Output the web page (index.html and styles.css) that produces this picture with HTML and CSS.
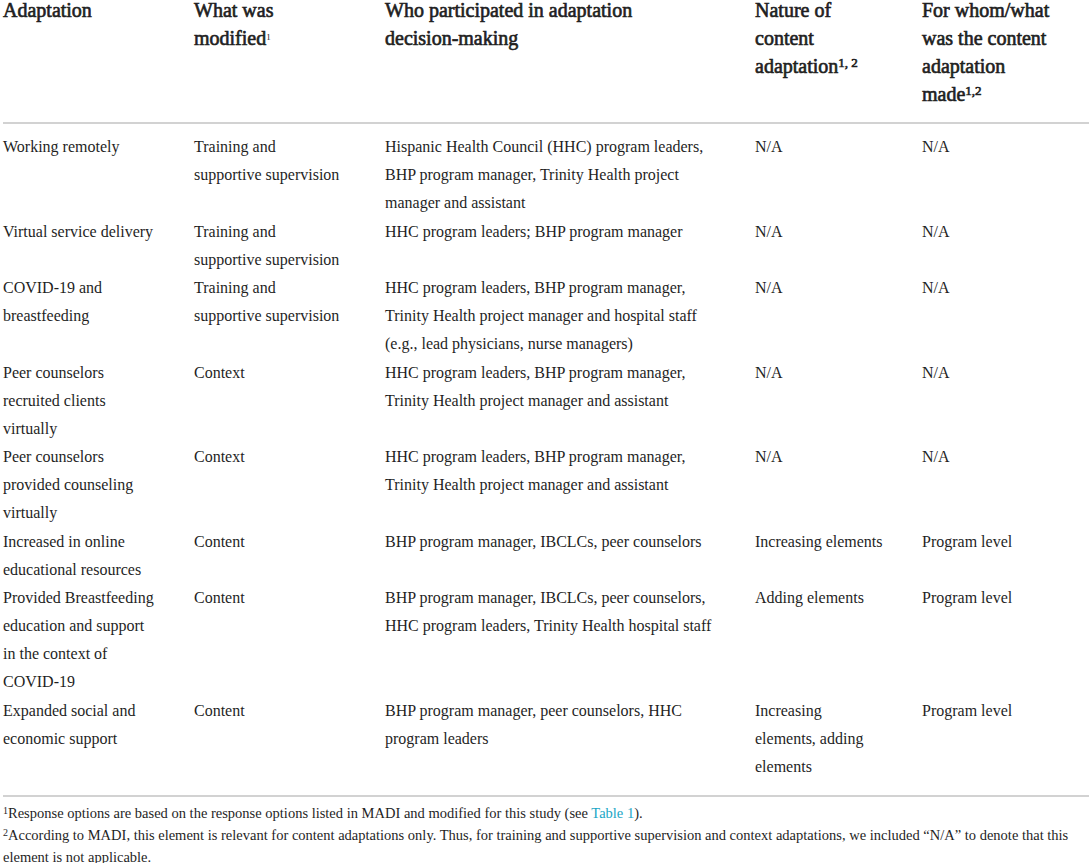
FILE: index.html
```html
<!DOCTYPE html>
<html lang="en">
<head>
<meta charset="utf-8">
<title>Adaptations table</title>
<link rel="stylesheet" href="styles.css">
</head>
<body>
<div class="wrap">
<table class="t">
<colgroup>
<col class="c1"><col class="c2"><col class="c3"><col class="c4"><col class="c5">
</colgroup>
<thead>
<tr>
<th class="k1">Adaptation</th>
<th class="k2">What was modified<sup class="tiny">1</sup></th>
<th class="k3">Who participated in adaptation <span class="nw">decision-making</span></th>
<th class="k4">Nature of content adaptation<sup class="big">1, 2</sup></th>
<th class="k5">For whom/what was the content adaptation made<sup class="big">1,2</sup></th>
</tr>
</thead>
<tbody>
<tr class="first">
<td class="k1">Working remotely</td>
<td class="k2">Training and supportive supervision</td>
<td class="k3">Hispanic Health Council (HHC) program leaders, BHP program manager, Trinity Health project manager and assistant</td>
<td class="k4">N/A</td>
<td class="k5">N/A</td>
</tr>
<tr>
<td class="k1">Virtual service delivery</td>
<td class="k2">Training and supportive supervision</td>
<td class="k3">HHC program leaders; BHP program manager</td>
<td class="k4">N/A</td>
<td class="k5">N/A</td>
</tr>
<tr>
<td class="k1">COVID-19 and breastfeeding</td>
<td class="k2">Training and supportive supervision</td>
<td class="k3">HHC program leaders, BHP program manager, Trinity Health project manager and hospital staff (e.g., lead physicians, nurse managers)</td>
<td class="k4">N/A</td>
<td class="k5">N/A</td>
</tr>
<tr>
<td class="k1">Peer counselors recruited clients virtually</td>
<td class="k2">Context</td>
<td class="k3">HHC program leaders, BHP program manager, Trinity Health project manager and assistant</td>
<td class="k4">N/A</td>
<td class="k5">N/A</td>
</tr>
<tr>
<td class="k1">Peer counselors provided counseling virtually</td>
<td class="k2">Context</td>
<td class="k3">HHC program leaders, BHP program manager, Trinity Health project manager and assistant</td>
<td class="k4">N/A</td>
<td class="k5">N/A</td>
</tr>
<tr>
<td class="k1">Increased in online educational resources</td>
<td class="k2">Content</td>
<td class="k3">BHP program manager, IBCLCs, peer counselors</td>
<td class="k4">Increasing elements</td>
<td class="k5">Program level</td>
</tr>
<tr>
<td class="k1">Provided Breastfeeding education and support in the context of COVID-19</td>
<td class="k2">Content</td>
<td class="k3">BHP program manager, IBCLCs, peer counselors, HHC program leaders, Trinity Health hospital staff</td>
<td class="k4">Adding elements</td>
<td class="k5">Program level</td>
</tr>
<tr class="last">
<td class="k1">Expanded social and economic support</td>
<td class="k2">Content</td>
<td class="k3">BHP program manager, peer counselors, HHC program leaders</td>
<td class="k4">Increasing elements, adding elements</td>
<td class="k5">Program level</td>
</tr>
</tbody>
</table>
<div class="notes">
<p><sup>1</sup>Response options are based on the response options listed in MADI and modified for this study (see <a class="link" href="#">Table 1</a>).</p>
<p><sup>2</sup>According to MADI, this element is relevant for content adaptations only. Thus, for training and supportive supervision and context adaptations, we included “N/A” to denote that this element is not applicable.</p>
</div>
</div>
</body>
</html>
```
FILE: styles.css
```css
html, body {
  margin: 0;
  padding: 0;
  background: #ffffff;
}

body {
  font-family: "Liberation Serif", "Times New Roman", serif;
  color: #1f1f1f;
  overflow: hidden;
}

.wrap {
  width: 1086px;
  margin-left: 3px;
  margin-top: -4px;
}

.t {
  width: 1086px;
  border-collapse: collapse;
  table-layout: fixed;
}

.c1 { width: 191px; }
.c2 { width: 191px; }
.c3 { width: 370px; }
.c4 { width: 167px; }
.c5 { width: 167px; }

.t th {
  font-family: "Liberation Serif", serif;
  font-size: 20px;
  font-weight: normal;
  -webkit-text-stroke: 0.65px #1f1f1f;
  line-height: 28px;
  text-align: left;
  vertical-align: top;
  padding-top: 0;
  padding-bottom: 14px;
  padding-left: 0;
  border-bottom: 2px solid #d2d2d2;
}

.nw {
  white-space: nowrap;
}

.t td {
  font-size: 16px;
  line-height: 28px;
  text-align: left;
  vertical-align: top;
  padding-top: 0;
  padding-bottom: 0.5px;
  padding-left: 0;
}

.t .k1 { padding-right: 34px; }
.t .k2 { padding-right: 43px; }
.t .k3 { padding-right: 35px; }
.t .k4 { padding-right: 37px; }
.t .k5 { padding-right: 35px; }

.t tr.first td {
  padding-top: 9px;
}

.t tr.last td {
  padding-bottom: 14px;
  border-bottom: 2px solid #d2d2d2;
}

sup {
  line-height: 0;
}

sup.tiny {
  font-size: 9px;
  -webkit-text-stroke: 0;
  vertical-align: 5px;
}

sup.big {
  font-size: 13px;
  vertical-align: 6px;
}

.notes {
  padding-top: 5px;
  font-size: 14.5px;
  line-height: 22px;
}

.notes p {
  margin: 0;
}

.notes sup {
  font-size: 10px;
  vertical-align: 4px;
}

.link {
  color: #1aa6c6;
  text-decoration: none;
}
```
